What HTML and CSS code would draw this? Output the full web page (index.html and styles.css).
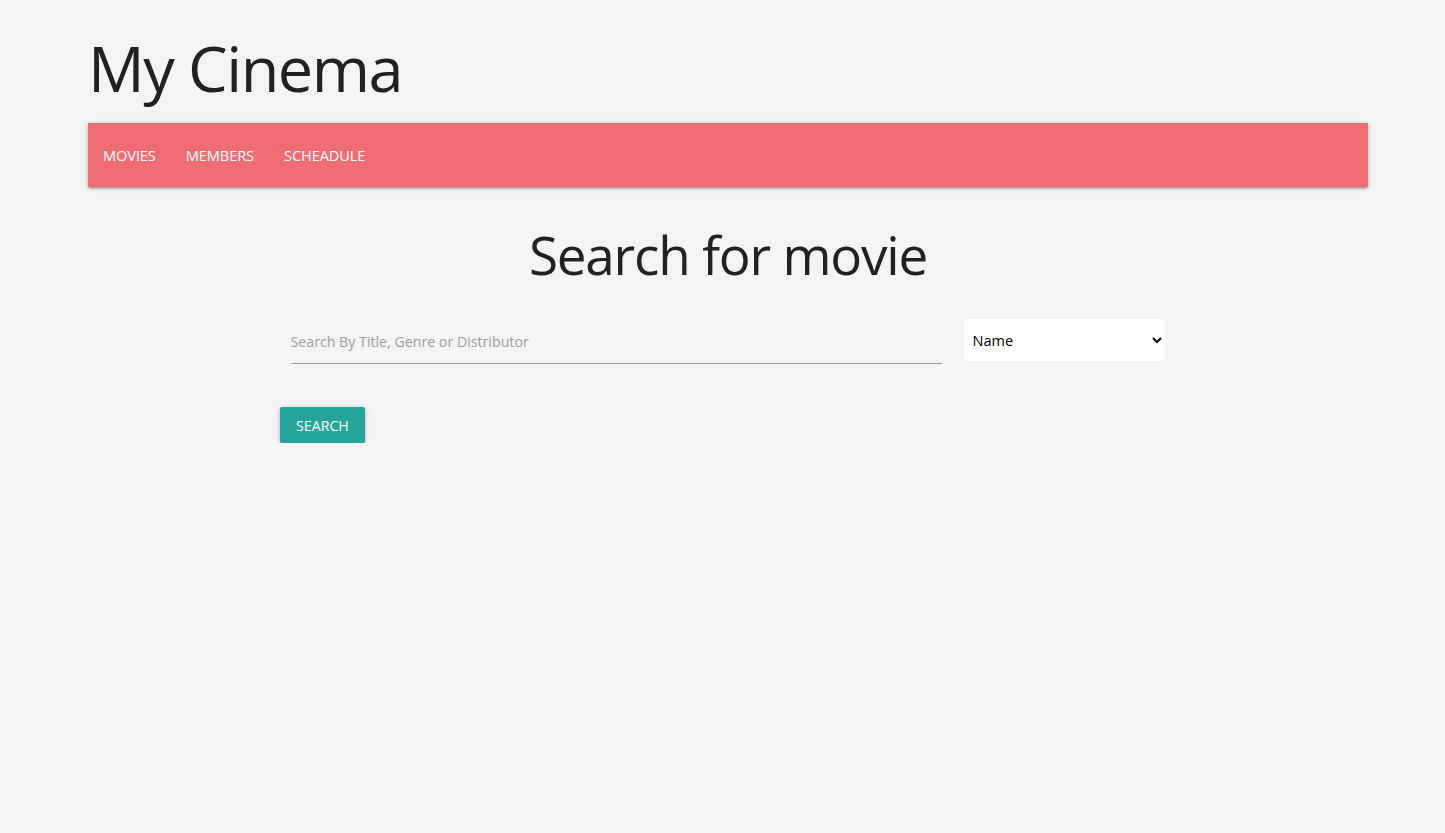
FILE: index.html
```html
<!DOCTYPE html>
<html>
<head>
<meta charset="utf-8">
<title>My Cinema</title>
<link rel="stylesheet" href="styles.css">
</head>
<body>
<div class="container">
  <h1 class="site-title">My Cinema</h1>
  <nav class="nav">
    <a href="#" class="nav-link">MOVIES</a>
    <a href="#" class="nav-link">MEMBERS</a>
    <a href="#" class="nav-link">SCHEADULE</a>
  </nav>
  <h2 class="page-title">Search for movie</h2>
  <form class="search-form">
    <div class="row">
      <div class="col col-9">
        <input class="search-input" type="text" placeholder="Search By Title, Genre or Distributor">
      </div>
      <div class="col col-3">
        <select class="sort-select">
          <option>Name</option>
        </select>
      </div>
    </div>
    <button type="button" class="btn">SEARCH</button>
  </form>
</div>
</body>
</html>
```
FILE: styles.css
```css
html, body {
  margin: 0;
  padding: 0;
  background: #f4f4f4;
  font-family: "Open Sans", "Noto Sans", sans-serif;
  color: #212121;
}
.container {
  width: 1280px;
  margin-left: 88px;
}
.site-title {
  margin: 0;
  padding-top: 27px;
  font-size: 63px;
  font-weight: 400;
  line-height: 82px;
  letter-spacing: -1.5px;
  height: 96px;
}
.nav {
  height: 64px;
  background: #ef6e73;
  display: flex;
  align-items: center;
  box-shadow: 0 2px 2px 0 rgba(0,0,0,.14), 0 3px 1px -2px rgba(0,0,0,.12), 0 1px 5px 0 rgba(0,0,0,.2);
}
.nav-link {
  color: #fff;
  text-decoration: none;
  font-size: 14.6px;
  padding: 0 15px;
  letter-spacing: -0.1px;
}
.page-title {
  margin: 35px 0 0;
  text-align: center;
  font-size: 53px;
  font-weight: 400;
  line-height: 66px;
  letter-spacing: -1.2px;
}
.search-form {
  width: 896px;
  margin: 0 auto;
}
.row {
  display: flex;
  margin-top: 28px;
}
.col {
  padding: 0 10.5px;
  box-sizing: border-box;
}
.col-9 { width: 75%; }
.col-3 { width: 25%; padding-top: 2px; }
.search-input {
  width: 100%;
  box-sizing: border-box;
  height: 48px;
  border: none;
  border-bottom: 1px solid #9e9e9e;
  background: transparent;
  outline: none;
  font-family: inherit;
  font-size: 14.2px;
  padding: 3px 0 0;
  color: #212121;
}
.search-input::placeholder {
  color: #9e9e9e;
}
.sort-select {
  width: 100%;
  height: 44px;
  border: 1px solid #f2f2f2;
  background: #fff;
  font-family: inherit;
  font-size: 14.5px;
  padding: 0 5px;
  color: #000;
  border-radius: 0;
}
.btn {
  margin-top: 43px;
  height: 36px;
  padding: 0 16px;
  border: none;
  border-radius: 2px;
  background: #26a69a;
  color: #fff;
  font-family: inherit;
  font-size: 14.2px;
  box-shadow: 0 2px 2px 0 rgba(0,0,0,.14), 0 3px 1px -2px rgba(0,0,0,.12), 0 1px 5px 0 rgba(0,0,0,.2);
}
```
